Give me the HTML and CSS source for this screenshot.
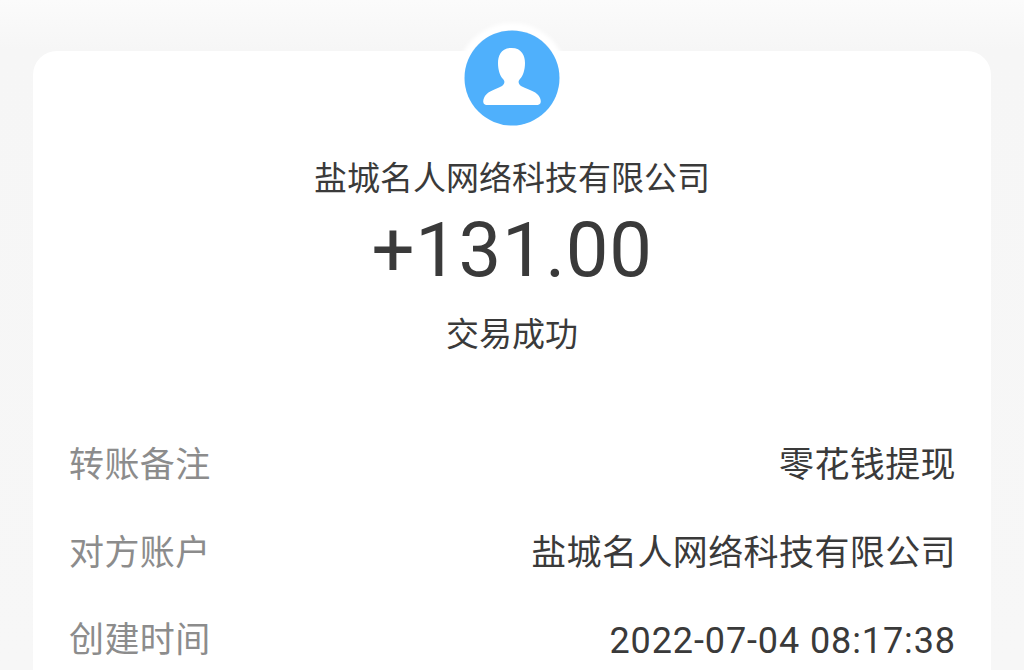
FILE: index.html
```html
<!DOCTYPE html>
<html lang="zh">
<head>
    <meta charset="UTF-8">
    <title>交易详情</title>
    <link rel="stylesheet" href="styles.css">
</head>
<body>
    <div class="card">
        <div class="avatar">
            <svg viewBox="0 0 96 96" width="96" height="96">
                <circle cx="48" cy="48" r="47.5" fill="#4fb0fc"/>
                <path fill="#fff" d="M47.5 18C37 18 34 26 34 33C34 40 36 46 39 49C41 51 41 54 38 56C30 60 22 62 20 68C18 73 20 75 24 75L72 75C76 75 78 73 76 68C74 62 65 60 57 56C54 54 54 51 56 49C59 46 61 40 61 33C61 26 58 18 47.5 18Z"/>
            </svg>
        </div>
        <div class="name">盐城名人网络科技有限公司</div>
        <div class="amount">+131.00</div>
        <div class="status">交易成功</div>
        <div class="rows">
            <div class="row"><span class="label">转账备注</span><span class="value">零花钱提现</span></div>
            <div class="row"><span class="label">对方账户</span><span class="value">盐城名人网络科技有限公司</span></div>
            <div class="row last"><span class="label">创建时间</span><span class="value date">2022-07-04 08:17:38</span></div>
        </div>
    </div>
</body>
</html>
```
FILE: styles.css
```css
html, body {
    margin: 0;
    height: 670px;
    overflow: hidden;
}
body {
    background: linear-gradient(#fbfbfb, #f6f6f6 50px, #f7f7f7);
    padding: 51px 33px 0 33px;
    box-sizing: border-box;
    font-family: "Roboto", "Noto Sans CJK SC", sans-serif;
    color: #3a3a3a;
}
.card {
    position: relative;
    background: #fff;
    border-radius: 24px 24px 0 0;
    height: 619px;
    padding-top: 107px;
    box-sizing: border-box;
    text-align: center;
}
.avatar {
    position: absolute;
    left: 431px;
    top: -21px;
    width: 96px;
    height: 96px;
    border-radius: 50%;
    box-shadow: 0 0 4px 7px #fff;
}
.avatar svg {
    display: block;
}
.name {
    font-size: 33px;
    line-height: 42px;
}
.amount {
    font-size: 76px;
    line-height: 90px;
    margin-top: 5px;
    letter-spacing: 0.6px;
}
.status {
    font-size: 33px;
    line-height: 42px;
    margin-top: 19px;
}
.rows {
    margin-top: 86px;
    padding: 0 35px 0 36px;
}
.row {
    display: flex;
    justify-content: space-between;
    height: 87.5px;
    font-size: 35px;
    line-height: 48px;
    letter-spacing: 0.4px;
}
.row.last {
    height: 48px;
}
.label {
    color: #8c8c8c;
}
.date {
    font-size: 36px;
    letter-spacing: 0.9px;
}
```
